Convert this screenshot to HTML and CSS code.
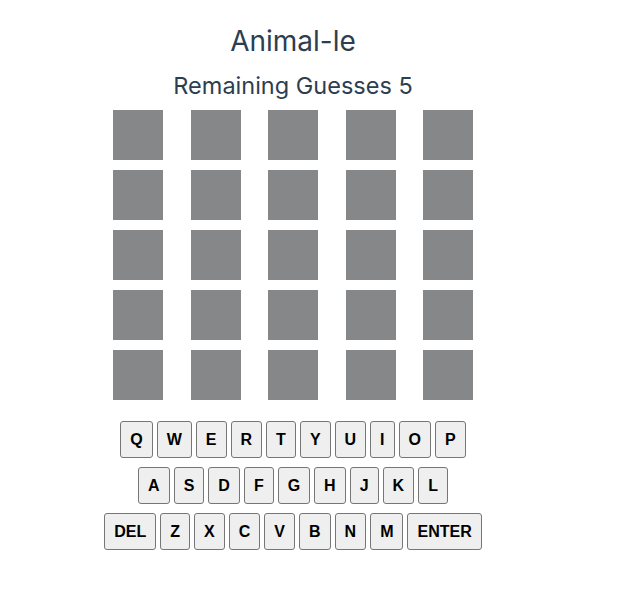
FILE: index.html
```html
<!DOCTYPE html>
<html lang="en">
<head>
<meta charset="utf-8">
<title>Animal-le</title>
<link rel="stylesheet" href="styles.css">
</head>
<body>
<div class="app">
  <h1 class="title">Animal-le</h1>
  <h2 class="remaining">Remaining Guesses 5</h2>
  <div class="board">
    <div class="board-row"><div class="tile"></div><div class="tile"></div><div class="tile"></div><div class="tile"></div><div class="tile"></div></div>
    <div class="board-row"><div class="tile"></div><div class="tile"></div><div class="tile"></div><div class="tile"></div><div class="tile"></div></div>
    <div class="board-row"><div class="tile"></div><div class="tile"></div><div class="tile"></div><div class="tile"></div><div class="tile"></div></div>
    <div class="board-row"><div class="tile"></div><div class="tile"></div><div class="tile"></div><div class="tile"></div><div class="tile"></div></div>
    <div class="board-row"><div class="tile"></div><div class="tile"></div><div class="tile"></div><div class="tile"></div><div class="tile"></div></div>
  </div>
  <div class="keyboard">
    <div class="key-row">
      <button class="key">Q</button><button class="key">W</button><button class="key">E</button><button class="key">R</button><button class="key">T</button><button class="key">Y</button><button class="key">U</button><button class="key">I</button><button class="key">O</button><button class="key">P</button>
    </div>
    <div class="key-row">
      <button class="key">A</button><button class="key">S</button><button class="key">D</button><button class="key">F</button><button class="key">G</button><button class="key">H</button><button class="key">J</button><button class="key">K</button><button class="key">L</button>
    </div>
    <div class="key-row">
      <button class="key">DEL</button><button class="key">Z</button><button class="key">X</button><button class="key">C</button><button class="key">V</button><button class="key">B</button><button class="key">N</button><button class="key">M</button><button class="key">ENTER</button>
    </div>
  </div>
</div>
</body>
</html>
```

FILE: styles.css
```css
html, body {
  background: #ffffff;
}
body {
  margin: 8px;
  font-family: Inter, "Noto Sans", sans-serif;
  color: #2c3e50;
}
.app {
  width: 570px;
  display: flex;
  flex-direction: column;
  align-items: center;
}
.title {
  margin: 16px 0 0;
  font-size: 28px;
  line-height: 34px;
  font-weight: 400;
}
.remaining {
  margin: 14px 0 0;
  font-size: 23.5px;
  line-height: 28px;
  font-weight: 400;
}
.board {
  margin-top: 10px;
  width: 360px;
  display: flex;
  flex-direction: column;
  gap: 10px;
}
.board-row {
  display: flex;
  justify-content: space-between;
}
.tile {
  width: 50px;
  height: 50px;
  background: #868788;
}
.keyboard {
  margin-top: 21px;
  display: flex;
  flex-direction: column;
  align-items: center;
  gap: 9px;
}
.key-row {
  display: flex;
  gap: 4px;
}
.key {
  height: 37px;
  padding: 0 9px;
  margin: 0;
  font-family: "Liberation Sans", Arial, sans-serif;
  font-weight: 700;
  font-size: 16px;
  color: #000000;
  background: #efefef;
  border: 1px solid #767676;
  border-radius: 3px;
}
```
